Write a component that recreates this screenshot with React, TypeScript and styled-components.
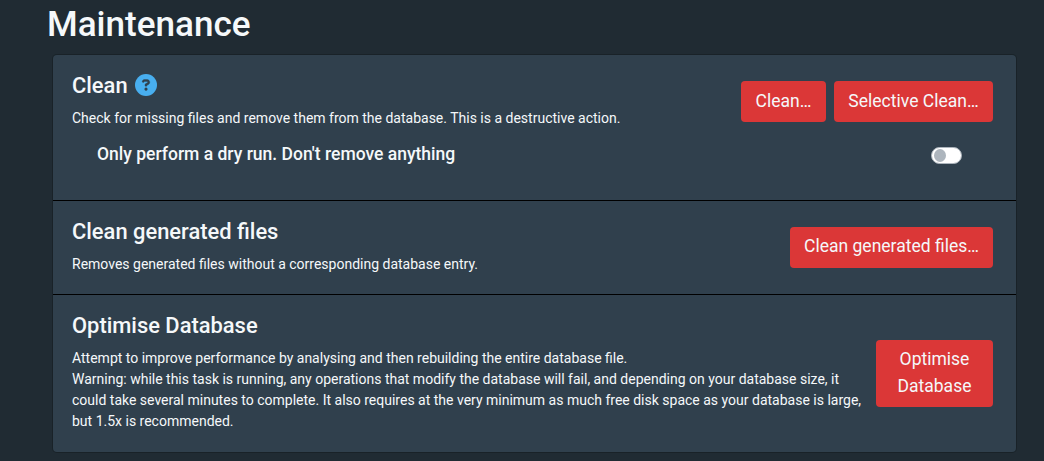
import React from "react";
import styled, { createGlobalStyle } from "styled-components";

const GlobalStyle = createGlobalStyle`
  *, *::before, *::after { box-sizing: border-box; }
  html { height: 100%; background: #202b33; }
  body {
    margin: 0;
    height: 100%;
    overflow: hidden;
    background: #202b33;
    color: #f5f8fa;
    font-family: Roboto, "Liberation Sans", sans-serif;
    font-size: 17.52px;
    line-height: 1.5;
  }
`;

const Page = styled.main`
  padding: 3px 28px 0 47px;
`;

const Title = styled.h1`
  margin: 0;
  font-size: 35.1px;
  font-weight: 500;
  line-height: 42px;
`;

const Card = styled.section`
  margin: 10px 0 0 6px;
  border-radius: 4px;
  background: #30404d;
  box-shadow: 0 0 0 1px rgba(16, 22, 26, 0.4);
`;

const Group = styled.div<{ $height: number }>`
  height: ${(p) => p.$height}px;

  & + & {
    border-top: 1px solid #000;
  }
`;

const Setting = styled.div<{ $tight?: boolean }>`
  display: flex;
  align-items: center;
  justify-content: space-between;
  padding: 18px 23px ${(p) => (p.$tight ? 12 : 18)}px 19px;
`;

const Info = styled.div`
  flex: 1 1 0;
  max-width: 792px;
`;

const Heading = styled.h3`
  display: flex;
  align-items: center;
  gap: 7px;
  margin: 0 0 9px;
  font-size: 21.9px;
  font-weight: 500;
  line-height: 26px;
`;

const Description = styled.p`
  margin: 0;
  font-size: 14px;
  line-height: 21px;
`;

const Actions = styled.div<{ $drop: number }>`
  display: flex;
  gap: 8px;
  margin-top: ${(p) => p.$drop}px;
`;

const Button = styled.button<{ $width: number; $centered?: boolean }>`
  width: ${(p) => p.$width}px;
  padding: ${(p) => (p.$centered ? "6.8px 13px" : "6px 13px 7.6px")};
  border: 0;
  border-radius: 4px;
  background: #db3737;
  color: #f5f8fa;
  font: inherit;
  line-height: 26.8px;
  text-align: center;
`;

const SubSetting = styled.label`
  display: flex;
  align-items: center;
  justify-content: space-between;
  height: 27px;
  padding: 0 54px 0 44px;
  font-weight: 500;
`;

const Switch = styled.span`
  display: flex;
  align-items: center;
  width: 31px;
  height: 17px;
  margin-top: 2px;
  padding-left: 2px;
  border: 1px solid #adb5bd;
  border-radius: 9px;
  background: #fff;
`;

const Knob = styled.span`
  width: 12px;
  height: 13px;
  border-radius: 50%;
  background: #adb5bd;
`;

const HelpMark = styled.svg`
  margin-bottom: 2px;
`;

const HelpIcon = () => (
  <HelpMark width="22" height="22" viewBox="0 0 512 512" aria-hidden="true">
    <circle cx="256" cy="256" r="256" fill="#48aff0" />
    <path
      d="M169.8 165.3c7.9-22.3 29.1-37.3 52.8-37.3h58.3c34.9 0 63.1 28.3 63.1 63.1c0 22.6-12.1 43.5-31.7 54.8L280 264.4c-.2 13-10.9 23.6-24 23.6c-13.3 0-24-10.7-24-24V250.5c0-8.6 4.6-16.5 12.1-20.8l44.3-25.4c4.7-2.7 7.6-7.7 7.6-13.1c0-8.4-6.8-15.1-15.1-15.1H222.6c-3.4 0-6.4 2.1-7.5 5.3l-.4 1.2c-4.4 12.5-18.2 19-30.6 14.6s-19-18.2-14.6-30.6l.4-1.2zM288 352a32 32 0 1 1 -64 0 32 32 0 1 1 64 0z"
      fill="#30404d"
      stroke="#30404d"
      strokeWidth="8"
    />
  </HelpMark>
);

export default function App() {
  return (
    <>
      <GlobalStyle />
      <Page>
        <Title>Maintenance</Title>
        <Card>
          <Group $height={145}>
            <Setting $tight>
              <Info>
                <Heading>
                  Clean <HelpIcon />
                </Heading>
                <Description>
                  Check for missing files and remove them from the database. This is a destructive action.
                </Description>
              </Info>
              <Actions $drop={1.3}>
                <Button $width={85} $centered>Clean…</Button>
                <Button $width={159} $centered>Selective Clean…</Button>
              </Actions>
            </Setting>
            <SubSetting>
              Only perform a dry run. Don't remove anything
              <Switch role="switch" aria-checked="false">
                <Knob />
              </Switch>
            </SubSetting>
          </Group>
          <Group $height={94}>
            <Setting>
              <Info>
                <Heading>Clean generated files</Heading>
                <Description>Removes generated files without a corresponding database entry.</Description>
              </Info>
              <Actions $drop={0.8}>
                <Button $width={203}>Clean generated files…</Button>
              </Actions>
            </Setting>
          </Group>
          <Group $height={158}>
            <Setting>
              <Info>
                <Heading>Optimise Database</Heading>
                <Description>
                  Attempt to improve performance by analysing and then rebuilding the entire database file.
                  <br />
                  Warning: while this task is running, any operations that modify the database will fail, and
                  depending on your database size, it could take several minutes to complete. It also requires at
                  the very minimum as much free disk space as your database is large, but 1.5x is recommended.
                </Description>
              </Info>
              <Actions $drop={2}>
                <Button $width={117}>Optimise Database</Button>
              </Actions>
            </Setting>
          </Group>
        </Card>
      </Page>
    </>
  );
}
